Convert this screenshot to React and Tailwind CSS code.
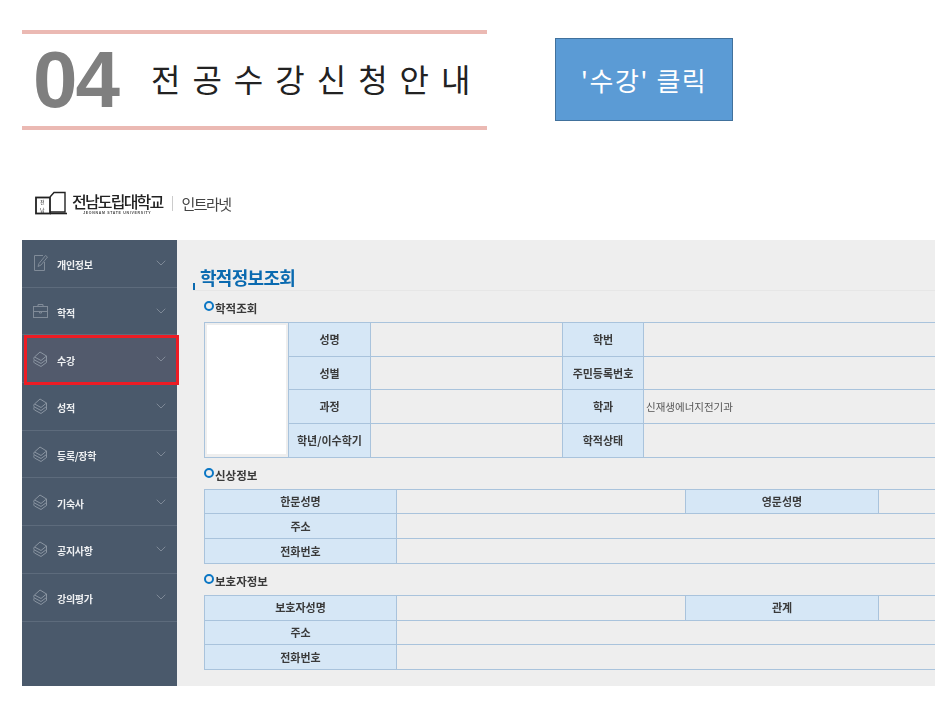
import { ChevronDown } from 'lucide-react';

const menu = [
  { label: '개인정보', icon: 'pen' },
  { label: '학적', icon: 'case' },
  { label: '수강', icon: 'stack', active: true },
  { label: '성적', icon: 'stack' },
  { label: '등록/장학', icon: 'stack' },
  { label: '기숙사', icon: 'stack' },
  { label: '공지사항', icon: 'stack' },
  { label: '강의평가', icon: 'stack' },
];

const MenuIcon = ({ type }) => {
  if (type === 'pen') {
    return (
      <svg width="15" height="18" viewBox="0 0 15 18" fill="none" stroke="#808b98" strokeWidth="1">
        <path d="M10 1.5H1.5V16.5H11.5V8" />
        <path d="M5 12.5l1-3 6.5-8 2 1.5-6.5 8z" />
      </svg>
    );
  }
  if (type === 'case') {
    return (
      <svg width="15" height="14" viewBox="0 0 15 14" fill="none" stroke="#808b98" strokeWidth="1">
        <rect x="0.5" y="2.5" width="14" height="11" />
        <path d="M5 2.5V0.5H10V2.5M0.5 7.5H14.5M6.5 7.5v1.5h2V7.5" />
      </svg>
    );
  }
  return (
    <svg width="15" height="16" viewBox="0 0 15 16" fill="none" stroke="#919ba7" strokeWidth="0.9">
      <path d="M7 1L13.5 5 8 9.5 1.5 6z" />
      <path d="M1.5 6C0.5 7 0.5 8 1.5 9L8 12.5 13.5 8.5V5" />
      <path d="M1.5 9C0.5 10 0.5 11 1.5 12L8 15.5 13.5 11.5V8.5" />
    </svg>
  );
};

const Sidebar = () => (
  <div className="w-[155px] shrink-0 bg-[#4a596b]">
    {menu.map(item => (
      <div
        key={item.label}
        className={`relative flex h-[47.7px] items-center border-b border-[#5d6b7c] pl-[8px] pr-[8px] ${item.active ? 'bg-[#525a6c]' : ''}`}
      >
        <span className="flex w-[20px] justify-center"><MenuIcon type={item.icon} /></span>
        <span className="ml-[7px] pt-[3px] text-[10px] font-bold tracking-[-0.3px] text-[#eef0f2]">{item.label}</span>
        <ChevronDown size={16} strokeWidth={1} className="ml-auto text-[#98a2ae]" />
        {item.active && (
          <div className="absolute left-[2px] top-0 h-[50px] w-[155px] border-[3px] border-[#ed1c24]" />
        )}
      </div>
    ))}
  </div>
);

const SectionTitle = ({ children }) => (
  <div className="flex h-[21px] items-start">
    <span className="h-[10px] w-[10px] rounded-full border-[2.5px] border-[#0a76c4]" />
    <span className="ml-[1px] mt-[-1px] text-[11.5px] font-bold leading-[16px] text-[#3a3a3a]">{children}</span>
  </div>
);

const th = 'border border-[#a9c3dc] bg-[#d6e7f6] text-center text-[11px] font-bold text-[#3a3a3a]';
const td = 'border border-[#a9c3dc] bg-[#eeeeee] text-[10.5px] text-[#555555]';

const InfoTable = () => (
  <table className="w-[732px] table-fixed border-collapse">
    <colgroup>
      <col className="w-[84px]" />
      <col className="w-[82px]" />
      <col className="w-[192px]" />
      <col className="w-[81px]" />
      <col className="w-[293px]" />
    </colgroup>
    <tbody>
      <tr className="h-[33.7px]">
        <td rowSpan={4} className="border border-[#a9c3dc] p-[2px]">
          <div className="h-[129px] w-full bg-white" />
        </td>
        <th className={th}>성명</th>
        <td className={td} />
        <th className={th}>학번</th>
        <td className={`${td} border-r-0`} />
      </tr>
      <tr className="h-[33.7px]">
        <th className={th}>성별</th>
        <td className={td} />
        <th className={th}>주민등록번호</th>
        <td className={`${td} border-r-0`} />
      </tr>
      <tr className="h-[33.7px]">
        <th className={th}>과정</th>
        <td className={td} />
        <th className={th}>학과</th>
        <td className={`${td} border-r-0 pl-[2px]`}>신재생에너지전기과</td>
      </tr>
      <tr className="h-[33.7px]">
        <th className={th}>학년/이수학기</th>
        <td className={td} />
        <th className={th}>학적상태</th>
        <td className={`${td} border-r-0`} />
      </tr>
    </tbody>
  </table>
);

const PersonTable = ({ rows }) => (
  <table className="w-[732px] table-fixed border-collapse">
    <colgroup>
      <col className="w-[192px]" />
      <col className="w-[289px]" />
      <col className="w-[193px]" />
      <col className="w-[58px]" />
    </colgroup>
    <tbody>
      <tr className="h-[24.7px]">
        <th className={th}>{rows[0]}</th>
        <td className={td} />
        <th className={th}>{rows[1]}</th>
        <td className={`${td} border-r-0`} />
      </tr>
      {rows.slice(2).map(label => (
        <tr key={label} className="h-[24.7px]">
          <th className={th}>{label}</th>
          <td colSpan={3} className={`${td} border-r-0`} />
        </tr>
      ))}
    </tbody>
  </table>
);

const App = () => (
  <div className="h-[713px] w-[949px] overflow-hidden bg-white pl-[22px] pt-[30px] font-['Noto_Sans_CJK_KR','Noto_Sans',sans-serif]">
    {/* Slide heading */}
    <div className="flex items-start">
      <div className="flex h-[100px] w-[465px] items-center border-y-4 border-[#ebb9b3] pl-[11px]">
        <span className="font-['Liberation_Sans',sans-serif] text-[80px] font-bold leading-none tracking-[-2px] text-[#7f7f7f]">04</span>
        <span className="mb-[4px] ml-[33px] whitespace-nowrap text-[32px] font-normal leading-none tracking-[12px] text-[#222222]">전공수강신청안내</span>
      </div>
      <div className="ml-[68px] mt-[8px] flex h-[83px] w-[178px] items-center justify-center border-[1.5px] border-[#41719c] bg-[#5b9bd5] text-[26px] tracking-[1.5px] text-white">
        '수강' 클릭
      </div>
    </div>

    {/* Portal logo */}
    <div className="ml-[13px] mt-[59px] flex h-[28px] items-center blur-[0.3px]">
      <svg width="32" height="24" viewBox="0 0 32 24" fill="none" stroke="#222222">
        <rect x="1" y="6.5" width="14" height="16" strokeWidth="1.8" />
        <path d="M15 6L19 1.5 30 1.5V21H15" strokeWidth="1.4" />
        <path d="M15 22.5H32" strokeWidth="1.6" />
        <text x="5" y="13" fontSize="5" fill="#222222" stroke="none">전</text>
        <text x="5" y="21" fontSize="5" fill="#222222" stroke="none">남</text>
      </svg>
      <div className="ml-[5px] flex flex-col items-center pt-[2px]">
        <span className="text-[16px] font-medium leading-[16px] tracking-[-1.8px] text-[#222222]">전남도립대학교</span>
        <span className="mt-[2.5px] font-['Liberation_Sans',sans-serif] text-[3.5px] font-bold leading-[4px] tracking-[0.7px] text-[#444444]">JEONNAM STATE UNIVERSITY</span>
      </div>
      <span className="ml-[10px] h-[15px] w-px bg-[#cccccc]" />
      <span className="ml-[8px] text-[15px] leading-none tracking-[-1.5px] text-[#444444]">인트라넷</span>
    </div>

    {/* Intranet capture */}
    <div className="mt-[23px] flex h-[446px] w-[913px] blur-[0.3px]">
      <Sidebar />
      <div className="min-w-0 flex-1 overflow-hidden bg-[#eeeeee] pl-[27px]">
        <div className="relative -ml-[11px] mt-[25px] flex h-[26px] items-start border-b border-[#e6e6e6] pl-[7px]">
          <span className="absolute bottom-0 left-0 h-[7px] w-[2px] bg-[#0a6ab0]" />
          <span className="text-[18px] font-bold leading-[24px] tracking-[-0.7px] text-[#0a6ab0]">학적정보조회</span>
        </div>
        <div className="mt-[10px]"><SectionTitle>학적조회</SectionTitle></div>
        <InfoTable />
        <div className="mt-[10px]"><SectionTitle>신상정보</SectionTitle></div>
        <PersonTable rows={['한문성명', '영문성명', '주소', '전화번호']} />
        <div className="mt-[10px]"><SectionTitle>보호자정보</SectionTitle></div>
        <PersonTable rows={['보호자성명', '관계', '주소', '전화번호']} />
      </div>
    </div>
  </div>
);

export default App;
